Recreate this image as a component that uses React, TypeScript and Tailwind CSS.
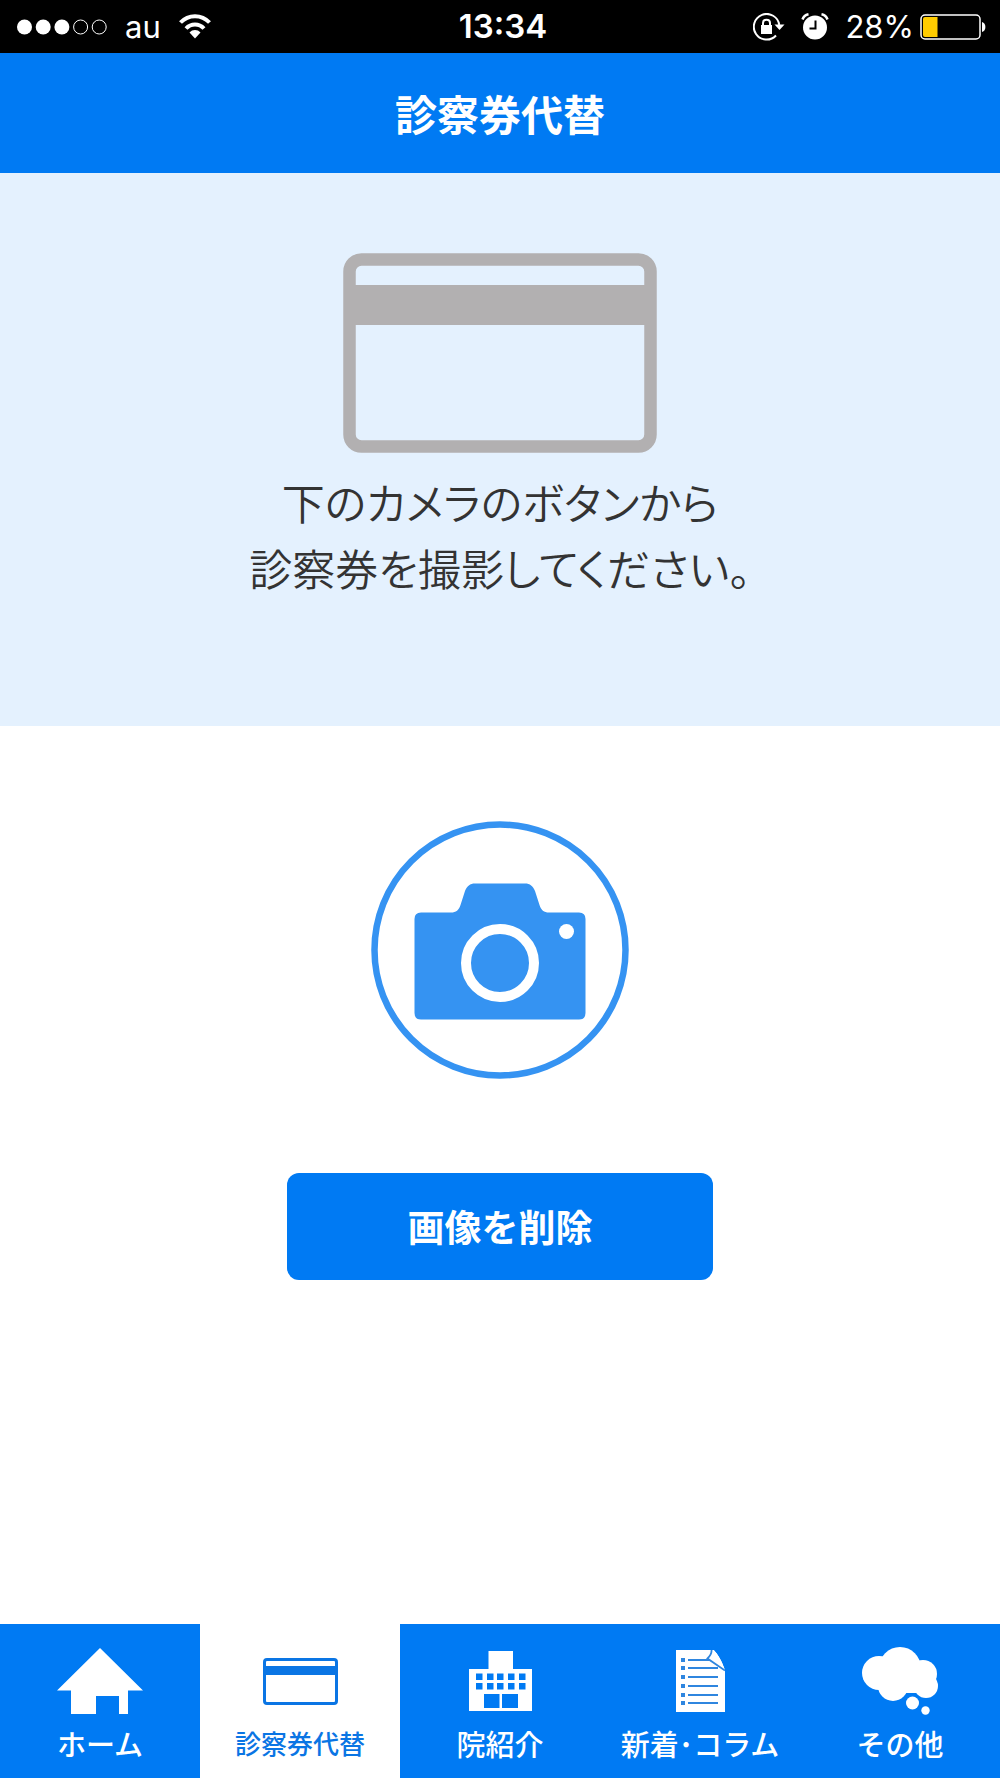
import type { ReactNode } from "react";

type Tab = {
  label: string;
  icon: ReactNode;
  active?: boolean;
};

const windowColumns = [7, 18, 28, 39, 50];
const noteRows = [10, 18, 27, 36, 45, 53];

function HomeIcon() {
  return (
    <svg width="86" height="66" viewBox="0 0 86 66" fill="currentColor" aria-hidden="true">
      <path d="M43 0 86 42.500H71V66H62V48H39V66H14V42.500H0Z" />
    </svg>
  );
}

function CardIcon() {
  return (
    <svg width="75" height="47" viewBox="0 0 75 47" fill="none" aria-hidden="true">
      <rect x="1.500" y="1.500" width="72" height="44" rx="2.500" stroke="currentColor" strokeWidth="3" />
      <path d="M1 8H74V17H1Z" fill="currentColor" />
    </svg>
  );
}

function ClinicIcon() {
  return (
    <svg width="63" height="60" viewBox="0 0 63 60" aria-hidden="true">
      <path d="M19.500 0H44V18H63V60H0V18H19.500Z" fill="currentColor" />
      {windowColumns.map((x) => (
        <g key={x} fill="#007af3">
          <rect x={x} y="22.500" width="6.500" height="6.500" />
          <rect x={x} y="32" width="6.500" height="6.500" />
        </g>
      ))}
      <path d="M15 43H30.500V57H15ZM33 43H49V57H33Z" fill="#007af3" />
    </svg>
  );
}

function NotesIcon() {
  return (
    <svg width="49" height="62" viewBox="0 0 49 62" aria-hidden="true">
      <path d="M0 0H37C42 4 46 11 49 20V62H0Z" fill="currentColor" />
      {noteRows.map((y) => (
        <g key={y} fill="#2f86df">
          <rect x="5" y={y - 2} width="4" height="4" />
          <rect x="12" y={y - 1} width="30" height="2" />
        </g>
      ))}
      <path d="M35.500 0C36 4 34 7 32 9L48.500 20C46 11 42 4 38 0Z" fill="currentColor" />
      <path d="M35.500 0C36 4 34 6 31.500 8.500L49 20.500" fill="none" stroke="#2f86df" strokeWidth="1.800" />
      <path d="M37.500 -1C42 4 46.500 11 50 20.500V-1Z" fill="#007af3" />
    </svg>
  );
}

function CloudIcon() {
  return (
    <svg width="76" height="68" viewBox="0 0 76 68" fill="currentColor" aria-hidden="true">
      <circle cx="17" cy="26" r="17" />
      <circle cx="38" cy="21" r="21" />
      <circle cx="61" cy="27" r="14" />
      <circle cx="31" cy="39" r="15" />
      <circle cx="64" cy="39" r="12" />
      <path d="M17 20H62V46H40Z" />
      <circle cx="50.500" cy="56" r="6.500" />
      <circle cx="63.500" cy="63.500" r="4.200" />
    </svg>
  );
}

const tabs: Tab[] = [
  { label: "ホーム", icon: <HomeIcon /> },
  { label: "診察券代替", icon: <CardIcon />, active: true },
  { label: "院紹介", icon: <ClinicIcon /> },
  { label: "新着･コラム", icon: <NotesIcon /> },
  { label: "その他", icon: <CloudIcon /> },
];

function StatusBar() {
  return (
    <div className="grid h-[53px] grid-cols-3 items-center bg-black pr-3.5 pl-4 font-['Inter','Liberation_Sans',sans-serif] text-[31px] leading-none text-white">
      <div className="flex items-center gap-[18px]">
        <svg width="91" height="16" viewBox="0 0 91 16" fill="currentColor" role="img" aria-label="電波">
          <circle cx="8.500" cy="8" r="7.500" />
          <circle cx="27.200" cy="8" r="7.500" />
          <circle cx="45.900" cy="8" r="7.500" />
          <circle cx="64.600" cy="8" r="7" fill="none" stroke="currentColor" />
          <circle cx="83.200" cy="8" r="7" fill="none" stroke="currentColor" />
        </svg>
        <span>au</span>
        <svg width="32" height="25" viewBox="0 0 32 25" fill="none" stroke="currentColor" strokeWidth="4" role="img" aria-label="Wi-Fi">
          <path d="M1.500 8.500C9.500 0 22.500 0 30.500 8.500" />
          <path d="M7 14.500C12 9.200 20 9.200 25 14.500" />
          <path d="M10.500 18.500C13.500 15.200 18.500 15.200 21.500 18.500L16 24.500Z" fill="currentColor" stroke="none" />
        </svg>
      </div>
      <span className="pl-1 text-center text-[33px] font-semibold">13:34</span>
      <div className="flex items-center justify-end">
        <svg className="mr-4" width="32" height="28" viewBox="0 0 32 28" fill="none" stroke="currentColor" strokeWidth="2" role="img" aria-label="画面の向きをロック">
          <path d="M26.300 12A12.800 12.800 0 1 0 23 22.500" />
          <path d="M21.500 11.500H31.500L26.500 17Z" fill="currentColor" stroke="none" />
          <rect x="8" y="12" width="11" height="9" fill="currentColor" stroke="none" />
          <path d="M10 12.500V10C10 5.500 17 5.500 17 10V12.500" />
        </svg>
        <svg className="mr-4" width="28" height="27" viewBox="0 0 28 27" fill="none" role="img" aria-label="アラーム">
          <circle cx="14" cy="14.500" r="12" fill="currentColor" />
          <path d="M1.500 6.500C2.500 3.500 4.500 1.800 7.500 1.200M26.500 6.500C25.500 3.500 23.500 1.800 20.500 1.200" stroke="currentColor" strokeWidth="2.500" />
          <path d="M14.500 7.500V15.500H8.500" stroke="black" strokeWidth="2" />
        </svg>
        <span className="mr-1.5">28%</span>
        <svg width="66" height="26" viewBox="0 0 66 26" fill="none" role="img" aria-label="バッテリー">
          <rect x="1" y="1" width="59" height="24" rx="4" stroke="currentColor" strokeWidth="1.500" />
          <path d="M3 5Q3 3 5 3H17.500V23H5Q3 23 3 21Z" fill="#ffcc00" />
          <path d="M62 8C66.500 9 66.500 17 62 18Z" fill="currentColor" />
        </svg>
      </div>
    </div>
  );
}

export default function App() {
  return (
    <div className="flex min-h-screen flex-col bg-white font-['Noto_Sans_CJK_JP',sans-serif]">
      <StatusBar />
      <header className="flex h-[120px] items-center justify-center bg-[#007af3]">
        <h1 className="text-[42px] font-bold leading-none text-white">診察券代替</h1>
      </header>

      <main className="flex flex-1 flex-col items-center">
        <section className="flex w-full flex-col items-center bg-[#e4f1fe] pt-20 pb-[126px]">
          <svg width="314" height="200" viewBox="0 0 314 200" fill="none" aria-hidden="true">
            <rect x="6.500" y="6.500" width="301" height="187" rx="12" stroke="#b2b0b1" strokeWidth="12.500" />
            <path d="M6 32H308V72H6Z" fill="#b2b0b1" />
          </svg>
          <p className="mt-[15px] text-center text-[43px] font-[350] leading-[66px] text-[#333] [font-feature-settings:'palt']">
            下のカメラのボタンから
            <br />
            診察券を撮影してください。
          </p>
        </section>

        <button type="button" aria-label="カメラ" className="mt-[95px] rounded-full text-[#3593f2]">
          <svg width="258" height="258" viewBox="0 0 258 258" fill="none">
            <circle cx="129" cy="129" r="125.500" stroke="currentColor" strokeWidth="6.500" />
            <path
              d="M50 91.500H80C85 91.500 88 89 89.500 84L94 70C96 65 99 62.500 104 62.500H154C159 62.500 162 65 164 70L168.500 84C170 89 173 91.500 178 91.500H208Q214.500 91.500 214.500 98V192Q214.500 198.500 208 198.500H50Q43.500 198.500 43.500 192V98Q43.500 91.500 50 91.500Z"
              fill="currentColor"
            />
            <circle cx="129" cy="142" r="34" stroke="white" strokeWidth="10" />
            <circle cx="195.500" cy="110.500" r="7.500" fill="white" />
          </svg>
        </button>

        <button
          type="button"
          className="mt-[94px] mb-12 h-[107px] w-[426px] max-w-full rounded-xl bg-[#007af3] text-[37px] font-bold leading-none text-white"
        >
          画像を削除
        </button>
      </main>

      <nav className="grid h-[154px] grid-cols-5 bg-[#007af3]">
        {tabs.map((tab) => (
          <a
            key={tab.label}
            href="#"
            aria-current={tab.active ? "page" : undefined}
            className={
              tab.active
                ? "flex flex-col items-center bg-white pt-5 text-[26px] font-medium text-[#0a75e4]"
                : "flex flex-col items-center pt-5 text-[29px] font-medium text-white"
            }
          >
            <span className="flex h-[74px] items-center">{tab.icon}</span>
            <span className="whitespace-nowrap leading-[50px]">{tab.label}</span>
          </a>
        ))}
      </nav>
    </div>
  );
}
